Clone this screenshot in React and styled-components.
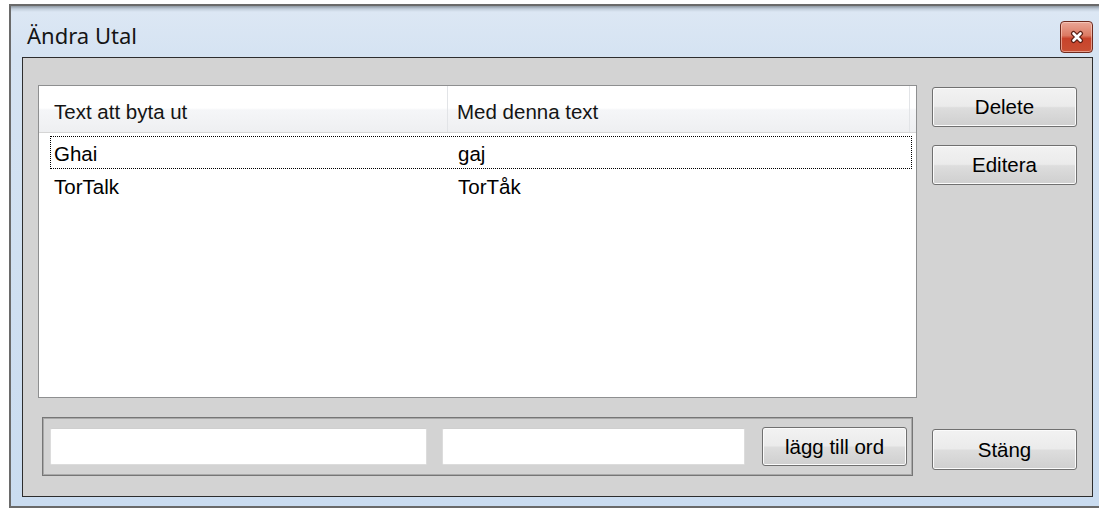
import styled, { createGlobalStyle } from "styled-components";

const GlobalStyle = createGlobalStyle`
  html, body {
    margin: 0;
    padding: 0;
    overflow: hidden;
    background: #ffffff;
  }
  body {
    width: 1099px;
    height: 510px;
    font-family: "Liberation Sans", Arial, sans-serif;
  }
`;

const words = [
  { from: "Ghai", to: "gaj" },
  { from: "TorTalk", to: "TorTåk" },
];

// window chrome
const Window = styled.div`
  box-sizing: content-box;
  width: 1071px;
  margin: 4px 0 0 9px;
  padding: 0 11px 9px;
  border: 2px solid #6a6a6a;
  background: linear-gradient(
    180deg,
    #8f98a2 0px,
    #c3cfdc 3px,
    #dce7f4 6px,
    #d5e3f2 50px,
    #cadcf0 100%
  );
`;

const TitleBar = styled.div`
  display: flex;
  align-items: flex-start;
  height: 51px;
`;

const Title = styled.span`
  padding: 14px 0 0 5px;
  font-family: "Noto Sans", "Open Sans", sans-serif;
  font-size: 22px;
  line-height: 30px;
  color: #151515;
`;

const CloseButton = styled.div`
  display: flex;
  align-items: center;
  justify-content: center;
  width: 33px;
  height: 32px;
  margin: 15px 0 0 auto;
  box-sizing: border-box;
  border: 1px solid #6e2a1e;
  border-radius: 4px;
  background: linear-gradient(180deg, #eaa797 0%, #dc7a63 45%, #c8432b 55%, #c94f33 100%);
  box-shadow: inset 0 0 0 1px rgba(255, 220, 210, 0.55);
`;

const Client = styled.div`
  box-sizing: border-box;
  width: 1071px;
  height: 440px;
  padding: 27px 15px 20px 15px;
  border: 1px solid #2d2d2d;
  background: #d3d3d3;
  display: grid;
  grid-template-columns: 879px 145px;
  grid-template-rows: 313px 59px;
  column-gap: 15px;
  row-gap: 19px;
`;

// list view
const List = styled.div`
  box-sizing: border-box;
  border: 1px solid #8e8f90;
  background: #ffffff;
`;

const Header = styled.div`
  display: grid;
  grid-template-columns: 409px 462px 1fr;
  height: 47px;
  box-sizing: border-box;
  border-bottom: 1px solid #d5d5d5;
  background: linear-gradient(180deg, #ffffff 0%, #ffffff 48%, #f5f6f8 52%, #eeeff1 100%);
`;

const HeaderCell = styled.div`
  padding: 6px 0 0 ${(p) => p.$indent}px;
  line-height: 40px;
  font-size: 20.5px;
  color: #141414;
  white-space: nowrap;
  border-right: ${(p) => (p.$last ? "none" : "1px solid #e2e4e7")};
`;

const Rows = styled.div`
  padding-top: 3px;
`;

const Row = styled.div`
  display: grid;
  grid-template-columns: 398px 1fr;
  box-sizing: border-box;
  width: 862px;
  height: 33px;
  margin-left: 11px;
  border: 1px ${(p) => (p.$focused ? "dotted #000000" : "solid transparent")};
`;

const Cell = styled.div`
  padding: 1px 0 0 ${(p) => p.$indent}px;
  line-height: 31px;
  font-size: 20.5px;
  color: #000000;
  white-space: nowrap;
`;

// buttons
const Button = styled.button`
  box-sizing: border-box;
  width: ${(p) => p.$width || 145}px;
  height: ${(p) => p.$height || 40}px;
  margin: 0;
  padding: 0;
  border: 1px solid #707070;
  border-radius: 3px;
  background: linear-gradient(180deg, #f2f2f2 0%, #ebebeb 48%, #dddddd 52%, #cfcfcf 100%);
  box-shadow: inset 0 0 0 1px #fbfbfb;
  font-family: "Liberation Sans", Arial, sans-serif;
  font-size: 20.5px;
  color: #000000;
`;

const SideButtons = styled.div`
  display: flex;
  flex-direction: column;
  gap: 18px;
  padding-top: 2px;
`;

const BottomSide = styled.div`
  padding-top: 12px;
`;

// add-word box under the list
const AddBox = styled.div`
  display: flex;
  align-items: center;
  margin: 0 4px;
  padding: 0 5px 0 7px;
  border: 1px solid #767676;
  box-shadow: inset 0 0 0 1px #a9a9a9;
`;

const TextBox = styled.input`
  box-sizing: border-box;
  width: ${(p) => p.$width}px;
  height: 37px;
  margin-right: ${(p) => p.$gap}px;
  border: 1px solid #dcdcdc;
  border-top-color: #cfcfcf;
  border-radius: 2px;
  background: #ffffff;
  outline: none;
`;

const CloseGlyph = () => (
  <svg width="16" height="14" viewBox="0 0 16 14">
    <path d="M4.5 3.5 L11.5 10.5 M11.5 3.5 L4.5 10.5" stroke="#5b1d12" strokeWidth="5" strokeLinecap="round" />
    <path d="M4.5 3.5 L11.5 10.5 M11.5 3.5 L4.5 10.5" stroke="#ffffff" strokeWidth="2.6" strokeLinecap="round" />
  </svg>
);

export default function App() {
  return (
    <>
      <GlobalStyle />
      <Window>
        <TitleBar>
          <Title>Ändra Utal</Title>
          <CloseButton>
            <CloseGlyph />
          </CloseButton>
        </TitleBar>
        <Client>
          <List>
            <Header>
              <HeaderCell $indent={15}>Text att byta ut</HeaderCell>
              <HeaderCell $indent={9}>Med denna text</HeaderCell>
              <HeaderCell $last />
            </Header>
            <Rows>
              {words.map((w, i) => (
                <Row key={w.from} $focused={i === 0}>
                  <Cell $indent={3}>{w.from}</Cell>
                  <Cell $indent={9}>{w.to}</Cell>
                </Row>
              ))}
            </Rows>
          </List>
          <SideButtons>
            <Button>Delete</Button>
            <Button>Editera</Button>
          </SideButtons>
          <AddBox>
            <TextBox $width={377} $gap={15} />
            <TextBox $width={303} $gap={17} />
            <Button $height={39}>lägg till ord</Button>
          </AddBox>
          <BottomSide>
            <Button $height={41}>Stäng</Button>
          </BottomSide>
        </Client>
      </Window>
    </>
  );
}
